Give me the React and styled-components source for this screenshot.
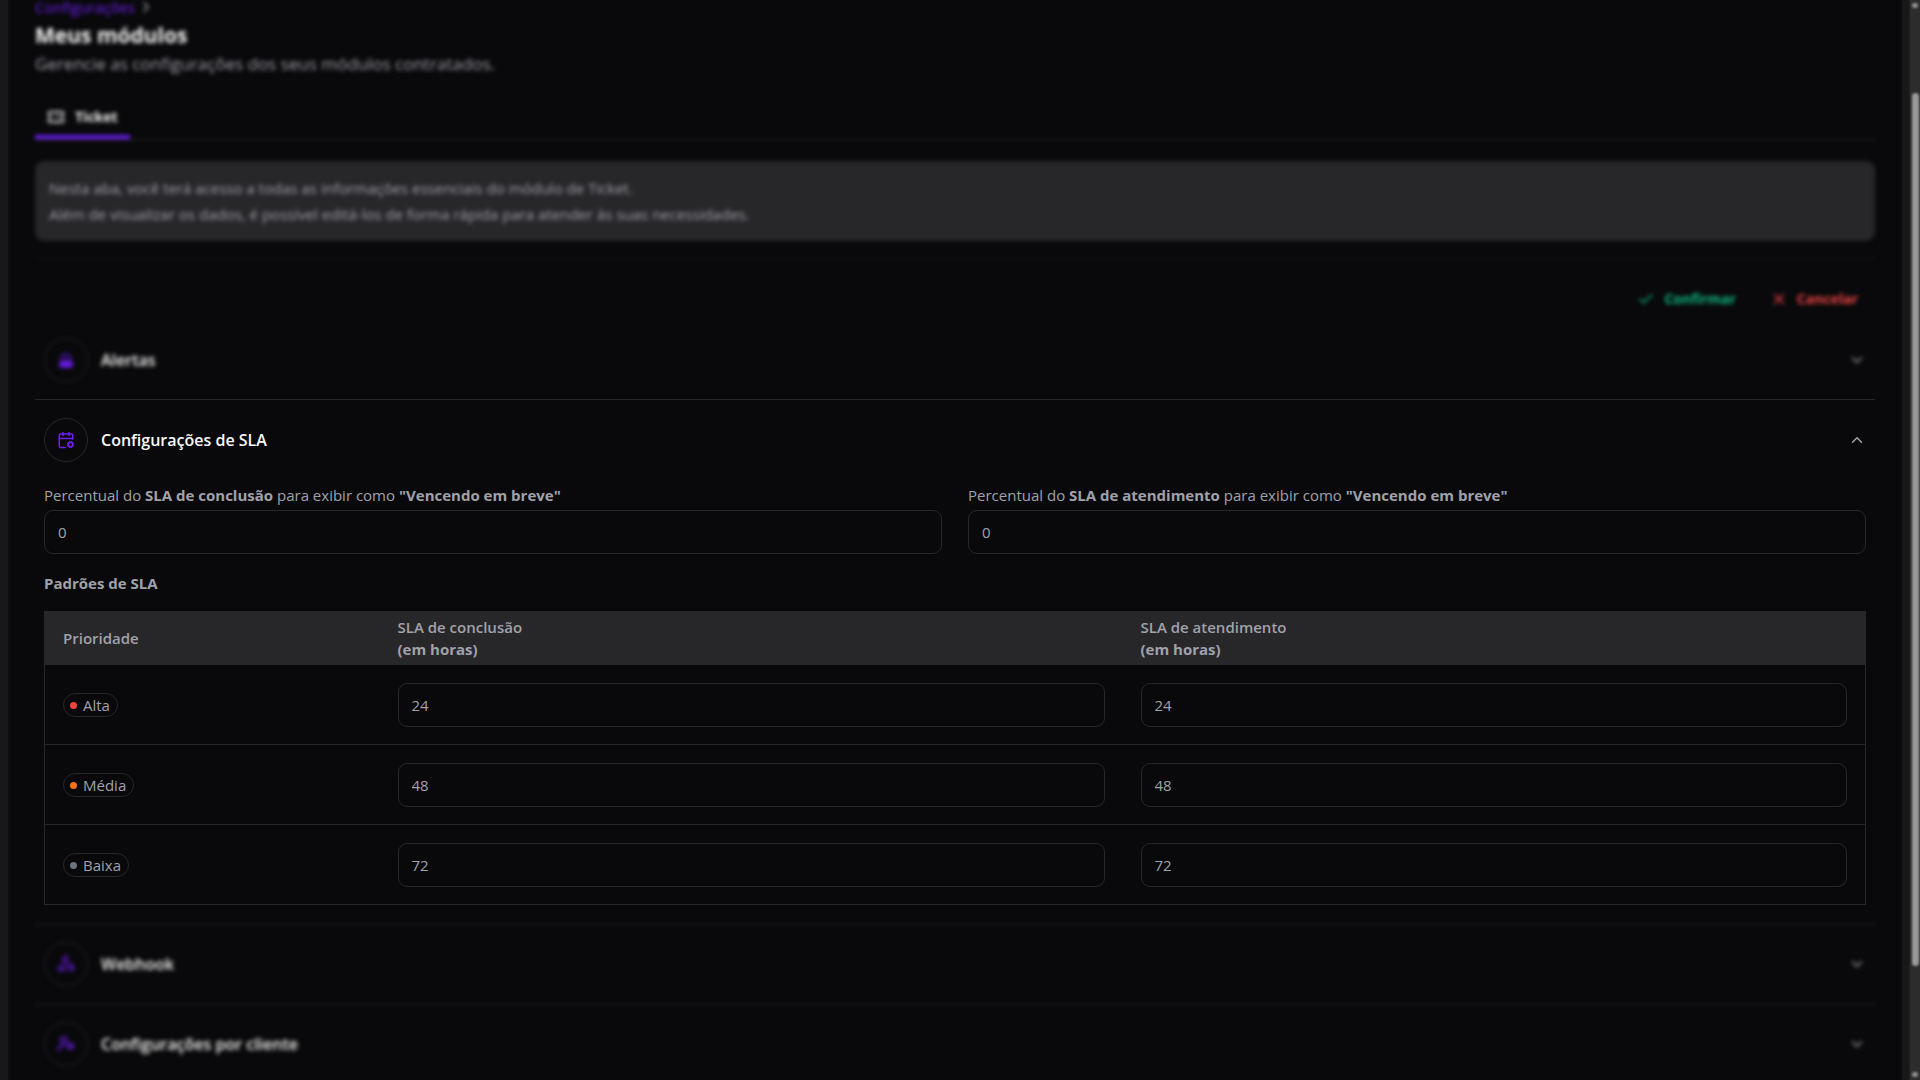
// Página de configurações dos módulos contratados
// A seção de SLA fica em foco, o restante da página fica desfocado

import styled, { createGlobalStyle, css } from 'styled-components';
import {
  CalendarCog,
  Check,
  ChevronDown,
  ChevronRight,
  ChevronUp,
  Ticket,
  UserCog,
  Webhook,
  X,
} from 'lucide-react';

const theme = {
  colors: {
    background: '#09090b',
    shell: '#18181b',
    surface: '#27272a',
    border: '#27272a',
    text: '#fafafa',
    muted: '#a1a1aa',
    primary: '#6f1df5',
    success: '#10b981',
    danger: '#ef4444',
  },
  font: '"Open Sans", "Noto Sans", sans-serif',
};

const GlobalStyle = createGlobalStyle`
  * {
    box-sizing: border-box;
    margin: 0;
    padding: 0;
  }

  body {
    background-color: ${theme.colors.background};
    color: ${theme.colors.muted};
    font-family: ${theme.font};
    font-size: 15px;
    line-height: 22px;
    overflow: hidden;
  }

  button,
  input {
    font: inherit;
    color: inherit;
    background: none;
    border: none;
  }
`;

// Desfoque do que está fora da seção ativa
const dimmed = css`
  filter: blur(2px);
`;

// Estrutura da página
const Shell = styled.div`
  display: flex;
  height: 100vh;
  overflow: hidden;
`;

const SideEdge = styled.div`
  flex: none;
  width: 8px;
  background-color: ${theme.colors.shell};
  box-shadow: 0 0 4px ${theme.colors.shell};
`;

const Main = styled.main`
  flex: 1;
  min-width: 0;
  padding: 0 27px;
`;

// Barra de rolagem
const ScrollTrack = styled.div`
  flex: none;
  width: 10px;
  display: flex;
  flex-direction: column;
  align-items: center;
  padding: 3px 0;
  background-color: #2c2c2c;
  box-shadow: 0 0 3px #2c2c2c;
`;

const ScrollBody = styled.div`
  flex: 1;
  display: grid;
  grid-template-rows: 8fr 82fr 10fr;
`;

const ScrollThumb = styled.div`
  grid-row: 2;
  width: 7px;
  border-radius: 4px;
  background-color: #9a9a9a;
  filter: blur(1px);
`;

const ScrollArrow = styled.span`
  width: 6px;
  height: 5px;
  border-radius: 2px;
  background-color: #8a8a8a;
  filter: blur(1px);
`;

// Cabeçalho
const PageHeader = styled.header`
  ${dimmed}
`;

const Breadcrumb = styled.nav`
  display: flex;
  align-items: center;
  gap: 2px;
  height: 14px;
  margin-bottom: 3px;
`;

const BreadcrumbLink = styled.a`
  color: ${theme.colors.primary};
  font-size: 15px;
  line-height: 14px;
  text-decoration: none;
`;

const PageTitle = styled.h1`
  color: ${theme.colors.text};
  font-size: 21px;
  font-weight: 700;
  line-height: 36px;
`;

const PageSubtitle = styled.p`
  font-size: 17px;
  line-height: 22px;
`;

// Abas
const TabList = styled.div`
  ${dimmed}
  display: flex;
  margin-top: 24px;
  border-bottom: 1px solid ${theme.colors.border};
`;

const Tab = styled.button`
  display: flex;
  align-items: center;
  gap: 10px;
  height: 40px;
  padding: 0 12px;
  border-bottom: 4px solid ${theme.colors.primary};
  color: ${theme.colors.text};
  font-size: 14px;
  font-weight: 700;
`;

const Notice = styled.section`
  ${dimmed}
  margin-top: 21px;
  padding: 14px;
  border-radius: 9px;
  background-color: ${theme.colors.surface};
  font-size: 15px;
  line-height: 26px;
`;

const Divider = styled.hr`
  ${dimmed}
  margin-top: 17px;
  border: none;
  border-top: 1px solid ${theme.colors.shell};
`;

// Ações
const Actions = styled.div`
  ${dimmed}
  display: flex;
  justify-content: flex-end;
  margin-top: 19px;
`;

const ActionButton = styled.button`
  display: flex;
  align-items: center;
  gap: 9px;
  height: 41px;
  padding: 0 17px;
  color: ${({ $color }) => $color};
  font-size: 14px;
  font-weight: 700;
`;

// Seções do acordeão
const Section = styled.section`
  border-top: 1px solid ${theme.colors.border};
`;

const BlurredSection = styled(Section)`
  ${dimmed}
  border-top-color: ${({ $first }) => ($first ? 'transparent' : theme.colors.border)};
`;

const SectionHeader = styled.button`
  display: flex;
  align-items: center;
  gap: 13px;
  width: 100%;
  height: 79px;
  padding: 0 9px;
  color: ${theme.colors.muted};
  text-align: left;
`;

const SectionIcon = styled.span`
  display: flex;
  align-items: center;
  justify-content: center;
  width: 44px;
  height: 44px;
  border: 1px solid ${theme.colors.border};
  border-radius: 50%;
  color: ${theme.colors.primary};
`;

const SectionTitle = styled.span`
  flex: 1;
  color: ${theme.colors.text};
  font-size: 16px;
  font-weight: 600;
`;

const SectionBody = styled.div`
  padding: 5px 9px 19px;
`;

const FieldGrid = styled.div`
  display: grid;
  grid-template-columns: 1fr 1fr;
  gap: 26px;
`;

const Label = styled.label`
  display: block;
  margin-bottom: 4px;
`;

const TextInput = styled.input`
  display: block;
  width: 100%;
  height: 44px;
  padding: 0 13px;
  border: 1px solid ${theme.colors.border};
  border-radius: 9px;
`;

const TableTitle = styled.h2`
  margin: 18px 0 17px;
  font-size: 15px;
  font-weight: 700;
`;

// Tabela de prioridades
const Table = styled.table`
  width: 100%;
  border: 1px solid ${theme.colors.border};
  border-collapse: collapse;
  table-layout: fixed;
`;

const HeadCell = styled.th`
  width: ${({ $width }) => $width || 'auto'};
  height: 53px;
  padding: 0 18px;
  background-color: ${theme.colors.surface};
  font-weight: 600;
  text-align: left;
`;

const HeadUnit = styled.strong`
  display: block;
  font-weight: 700;
`;

const Cell = styled.td`
  padding: 18px 18px 17px;
  border-bottom: 1px solid ${theme.colors.border};
`;

const Badge = styled.span`
  display: inline-flex;
  align-items: center;
  gap: 6px;
  height: 24px;
  padding: 0 7px 0 6px;
  border: 1px solid ${theme.colors.border};
  border-radius: 12px;
`;

const Dot = styled.span`
  width: 7px;
  height: 7px;
  border-radius: 50%;
  background-color: ${({ $color }) => $color};
`;

const priorities = [
  { name: 'Alta', color: '#ef4444', hours: 24 },
  { name: 'Média', color: '#f97316', hours: 48 },
  { name: 'Baixa', color: '#6b7280', hours: 72 },
];

// Ícone de alerta (sirene)
function AlertIcon({ size }) {
  return (
    <svg width={size} height={size} viewBox="0 0 24 24" fill="none" stroke="currentColor" strokeWidth="2">
      <path d="M6 15v-5a6 6 0 0 1 12 0v5" />
      <path d="M12 8v7" />
      <rect x="4" y="15" width="16" height="6" rx="1" fill="currentColor" />
    </svg>
  );
}

// Seção fechada do acordeão
function ClosedSection({ icon: Icon, title, first }) {
  return (
    <BlurredSection $first={first}>
      <SectionHeader type="button" aria-expanded="false">
        <SectionIcon>
          <Icon size={18} />
        </SectionIcon>
        <SectionTitle>{title}</SectionTitle>
        <ChevronDown size={18} />
      </SectionHeader>
    </BlurredSection>
  );
}

function App() {
  return (
    <>
      <GlobalStyle />
      <Shell>
        <SideEdge />
        <Main>
          <PageHeader>
            <Breadcrumb>
              <BreadcrumbLink href="#">Configurações</BreadcrumbLink>
              <ChevronRight size={18} />
            </Breadcrumb>
            <PageTitle>Meus módulos</PageTitle>
            <PageSubtitle>Gerencie as configurações dos seus módulos contratados.</PageSubtitle>
          </PageHeader>

          <TabList role="tablist">
            <Tab type="button" role="tab" aria-selected="true">
              <Ticket size={18} />
              Ticket
            </Tab>
          </TabList>

          <Notice>
            <p>Nesta aba, você terá acesso a todas as informações essenciais do módulo de Ticket.</p>
            <p>Além de visualizar os dados, é possível editá-los de forma rápida para atender às suas necessidades.</p>
          </Notice>

          <Divider />

          <Actions>
            <ActionButton type="button" $color={theme.colors.success}>
              <Check size={18} />
              Confirmar
            </ActionButton>
            <ActionButton type="button" $color={theme.colors.danger}>
              <X size={18} />
              Cancelar
            </ActionButton>
          </Actions>

          <ClosedSection icon={AlertIcon} title="Alertas" first />

          {/* Seção ativa */}
          <Section>
            <SectionHeader type="button" aria-expanded="true">
              <SectionIcon>
                <CalendarCog size={18} />
              </SectionIcon>
              <SectionTitle>Configurações de SLA</SectionTitle>
              <ChevronUp size={18} />
            </SectionHeader>
            <SectionBody>
              <FieldGrid>
                <div>
                  <Label htmlFor="conclusao">
                    Percentual do <strong>SLA de conclusão</strong> para exibir como <strong>"Vencendo em breve"</strong>
                  </Label>
                  <TextInput id="conclusao" defaultValue="0" />
                </div>
                <div>
                  <Label htmlFor="atendimento">
                    Percentual do <strong>SLA de atendimento</strong> para exibir como <strong>"Vencendo em breve"</strong>
                  </Label>
                  <TextInput id="atendimento" defaultValue="0" />
                </div>
              </FieldGrid>

              <TableTitle>Padrões de SLA</TableTitle>
              <Table>
                <thead>
                  <tr>
                    <HeadCell $width="335px">Prioridade</HeadCell>
                    <HeadCell>
                      SLA de conclusão
                      <HeadUnit>(em horas)</HeadUnit>
                    </HeadCell>
                    <HeadCell>
                      SLA de atendimento
                      <HeadUnit>(em horas)</HeadUnit>
                    </HeadCell>
                  </tr>
                </thead>
                <tbody>
                  {priorities.map(({ name, color, hours }) => (
                    <tr key={name}>
                      <Cell>
                        <Badge>
                          <Dot $color={color} />
                          {name}
                        </Badge>
                      </Cell>
                      <Cell>
                        <TextInput aria-label={`SLA de conclusão, ${name}`} defaultValue={hours} />
                      </Cell>
                      <Cell>
                        <TextInput aria-label={`SLA de atendimento, ${name}`} defaultValue={hours} />
                      </Cell>
                    </tr>
                  ))}
                </tbody>
              </Table>
            </SectionBody>
          </Section>

          <ClosedSection icon={Webhook} title="Webhook" />
          <ClosedSection icon={UserCog} title="Configurações por cliente" />
        </Main>
        <SideEdge />
        <ScrollTrack aria-hidden="true">
          <ScrollArrow />
          <ScrollBody>
            <ScrollThumb />
          </ScrollBody>
          <ScrollArrow />
        </ScrollTrack>
      </Shell>
    </>
  );
}

export default App;
